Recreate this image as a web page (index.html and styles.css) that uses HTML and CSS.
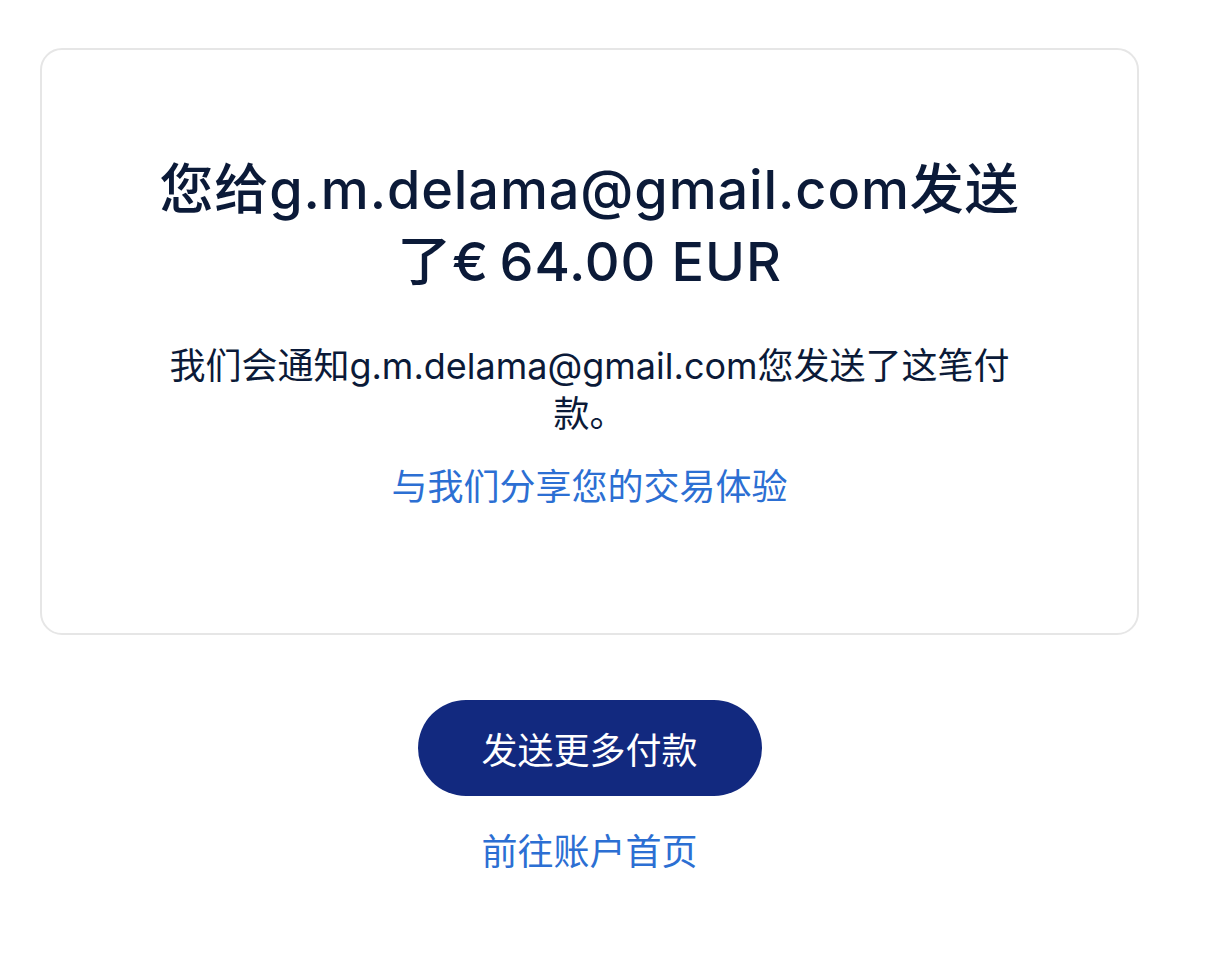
FILE: index.html
```html
<!DOCTYPE html>
<html lang="zh-CN">
<head>
<meta charset="utf-8">
<title>付款已发送</title>
<link rel="stylesheet" href="styles.css">
</head>
<body>
<main class="page">
  <section class="card">
    <div class="card-body">
      <h1 class="title">您给g.m.delama@gmail.com发送了€&#8239;64.00 EUR</h1>
      <p class="message">我们会通知g.m.delama@gmail.com您发送了这笔付款。</p>
      <a class="link" href="#">与我们分享您的交易体验</a>
    </div>
  </section>
  <div class="actions">
    <a class="button" href="#">发送更多付款</a>
    <a class="link home-link" href="#">前往账户首页</a>
  </div>
</main>
</body>
</html>
```
FILE: styles.css
```css
* { box-sizing: border-box; }
html, body { margin: 0; padding: 0; background: #ffffff; }
body {
  font-family: Inter, "Noto Sans CJK SC", "Noto Sans", sans-serif;
  color: #0b1a38;
}
.page {
  width: 1099px;
  margin-left: 40px;
  padding-top: 48px;
}
.card {
  border: 2px solid #e6e6e6;
  border-radius: 22px;
  height: 587px;
  padding: 104px 0 0;
  display: flex;
  justify-content: center;
}
.card-body {
  width: 864px;
  display: flex;
  flex-direction: column;
  align-items: center;
  text-align: center;
}
.title {
  margin: 0;
  font-size: 54px;
  font-weight: 500;
  line-height: 72px;
  letter-spacing: 0.9px;
}
.message {
  margin: 44px 0 0;
  font-size: 36px;
  line-height: 48px;
  font-weight: 400;
}
.link {
  color: #2c6fd3;
  text-decoration: none;
  font-size: 36px;
  line-height: 48px;
}
.card-body .link { margin-top: 25px; }
.actions {
  display: flex;
  flex-direction: column;
  align-items: center;
  padding-top: 65px;
}
.button {
  width: 344px;
  height: 96px;
  border-radius: 48px;
  background: #12297f;
  color: #ffffff;
  font-size: 36px;
  display: flex;
  align-items: center;
  justify-content: center;
  text-decoration: none;
}
.home-link { margin-top: 32px; }
```
